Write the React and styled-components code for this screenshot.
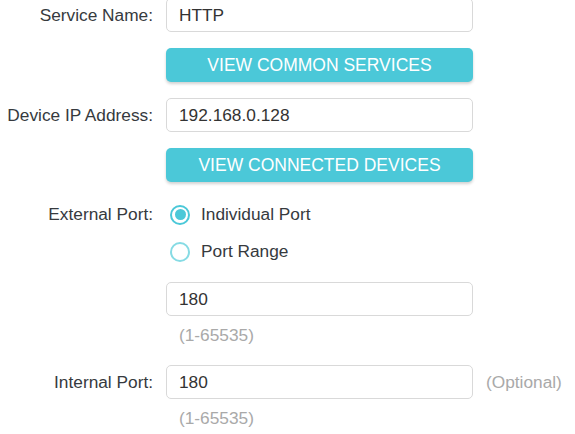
import React from 'react';
import styled, { createGlobalStyle } from 'styled-components';

const GlobalStyle = createGlobalStyle`
  html, body {
    margin: 0;
    padding: 0;
    background: #fff;
  }
  body {
    font-family: 'Liberation Sans', Arial, sans-serif;
    font-size: 17.3px;
    color: #333;
  }
`;

const Form = styled.div`
  margin-top: -2px;
  display: grid;
  grid-template-columns: 153px 307px auto;
  column-gap: 13px;
  align-items: start;
`;

const Label = styled.div`
  grid-column: 1;
  text-align: right;
  color: #363a3e;
  line-height: ${props => props.tall ? '37px' : '34px'};
  margin-top: ${props => props.offset || 0}px;
  white-space: nowrap;
`;

const Field = styled.div`
  grid-column: 2;
  display: flex;
  flex-direction: column;
  margin-top: ${props => props.offset || 0}px;
`;

const Extra = styled.div`
  grid-column: 3;
  line-height: 34px;
  color: #a9a9a9;
  margin-top: ${props => props.offset || 0}px;
`;

const Input = styled.div`
  box-sizing: border-box;
  height: 34px;
  border: 1px solid #d9d9d9;
  border-radius: 5px;
  padding: 0 12px;
  line-height: 32px;
  color: #333;
  background: #fff;
  margin-top: ${props => props.offset || 0}px;
`;

const Button = styled.div`
  height: 34px;
  border-radius: 5px;
  background: #4bc8d8;
  color: #fff;
  font-size: 17.5px;
  text-align: center;
  line-height: 34px;
  text-transform: uppercase;
  box-shadow: 0 2px 3px rgba(0, 0, 0, 0.18);
  margin-top: 16px;
  cursor: pointer;
`;

const RadioItem = styled.label`
  display: flex;
  align-items: center;
  height: 37px;
  color: #363a3e;
  cursor: pointer;
`;

const RadioDot = styled.span`
  box-sizing: border-box;
  width: 20px;
  height: 20px;
  border-radius: 50%;
  border: 2px solid ${props => props.checked ? '#4bc8d8' : '#86dbe4'};
  margin: 0 11px 0 4px;
  display: flex;
  align-items: center;
  justify-content: center;

  &::after {
    content: '';
    width: 11px;
    height: 11px;
    border-radius: 50%;
    background: ${props => props.checked ? '#4bc8d8' : 'transparent'};
  }
`;

const Hint = styled.div`
  color: #a9a9a9;
  line-height: 20px;
  padding-left: 13px;
  margin-top: ${props => props.offset || 0}px;
`;

const Radio = ({ checked, children }) => (
  <RadioItem>
    <RadioDot checked={checked} />
    {children}
  </RadioItem>
);

const App = () => {
  return (
    <>
      <GlobalStyle />
      <Form>
        <Label>Service Name:</Label>
        <Field>
          <Input>HTTP</Input>
          <Button>View Common Services</Button>
        </Field>

        <Label offset={16}>Device IP Address:</Label>
        <Field offset={16}>
          <Input>192.168.0.128</Input>
          <Button>View Connected Devices</Button>
        </Field>

        <Label tall offset={14}>External Port:</Label>
        <Field offset={14}>
          <Radio checked>Individual Port</Radio>
          <Radio>Port Range</Radio>
          <Input offset={12}>180</Input>
          <Hint offset={9}>(1-65535)</Hint>
        </Field>

        <Label offset={20}>Internal Port:</Label>
        <Field offset={20}>
          <Input>180</Input>
          <Hint offset={9}>(1-65535)</Hint>
        </Field>
        <Extra offset={20}>(Optional)</Extra>
      </Form>
    </>
  );
};

export default App;
